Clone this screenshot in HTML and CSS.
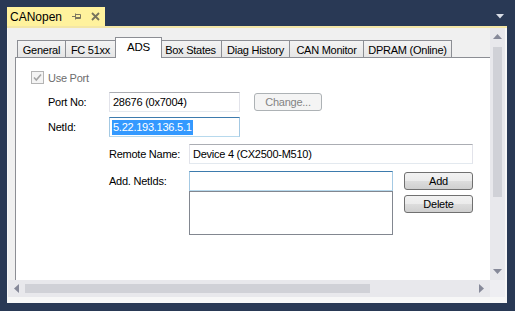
FILE: index.html
```html
<!DOCTYPE html>
<html>
<head>
<meta charset="utf-8">
<link rel="stylesheet" href="styles.css">
</head>
<body>
<div class="window">
  <div class="doc-bar">
    <div class="doc-tab">
      <span class="doc-title">CANopen</span>
      <svg class="pin" width="9" height="7" viewBox="0 0 9 7"><path d="M0 3.5H3M3.5 0.5V6.5M3.5 1.5H8.5V5.5H3.5" stroke="#7c7760" fill="none"/><path d="M4 4.5H8" stroke="#7c7760"/></svg>
      <svg class="close" width="9" height="9" viewBox="0 0 9 9"><path d="M1 1L8 8M8 1L1 8" stroke="#77735c" stroke-width="1.8"/></svg>
    </div>
    <div class="doc-menu"><svg width="8" height="5" viewBox="0 0 8 5"><path d="M0 0H8L4 4.5Z" fill="#d8dde6"/></svg></div>
  </div>
  <div class="frame">
    <div class="viewport">
      <div class="tabctl">
        <div class="tabs">
          <div class="tab tab-general">General</div>
          <div class="tab tab-fc">FC 51xx</div>
          <div class="tab tab-active">ADS</div>
          <div class="tab tab-box">Box States</div>
          <div class="tab tab-diag">Diag History</div>
          <div class="tab tab-can">CAN Monitor</div>
          <div class="tab tab-dpram">DPRAM (Online)</div>
        </div>
        <div class="page">
          <div class="check-row">
            <span class="checkbox"><svg width="11" height="11" viewBox="0 0 11 11"><path d="M2 5.5L4.3 8L9 2.5" stroke="#a4a4a4" stroke-width="1.6" fill="none"/></svg></span>
            <span>Use Port</span>
          </div>
          <div class="field-row row-port">
            <span class="label-a">Port No:</span>
            <div class="textbox tb-short">28676 (0x7004)</div>
            <button class="btn btn-change">Change...</button>
          </div>
          <div class="field-row row-netid">
            <span class="label-a">NetId:</span>
            <div class="textbox tb-short tb-focus"><span class="sel">5.22.193.136.5.1</span></div>
          </div>
          <div class="field-row row-remote">
            <span class="label-b">Remote Name:</span>
            <div class="textbox tb-remote">Device 4 (CX2500-M510)</div>
          </div>
          <div class="field-row row-add">
            <span class="label-b label-top">Add. NetIds:</span>
            <div class="add-col">
              <div class="textbox tb-add tb-focus"></div>
              <div class="listbox"></div>
            </div>
            <div class="btn-col">
              <button class="btn">Add</button>
              <button class="btn">Delete</button>
            </div>
          </div>
        </div>
      </div>
    </div>
    <div class="vscroll">
      <div class="sb-arrow"><svg width="9" height="5" viewBox="0 0 9 5"><path d="M0 5H9L4.5 0Z" fill="#868999"/></svg></div>
      <div class="vthumb"></div>
      <div class="sb-spacer"></div>
      <div class="sb-arrow"><svg width="9" height="5" viewBox="0 0 9 5"><path d="M0 0H9L4.5 5Z" fill="#868999"/></svg></div>
    </div>
    <div class="hscroll">
      <div class="sb-arrow-h"><svg width="5" height="9" viewBox="0 0 5 9"><path d="M5 0V9L0 4.5Z" fill="#868999"/></svg></div>
      <div class="hthumb"></div>
      <div class="sb-spacer"></div>
      <div class="sb-arrow-h"><svg width="5" height="9" viewBox="0 0 5 9"><path d="M0 0V9L5 4.5Z" fill="#868999"/></svg></div>
    </div>
    <div class="corner"></div>
  </div>
</div>
</body>
</html>
```
FILE: styles.css
```css
html, body {
  margin: 0;
  padding: 0;
}
body {
  background: #293955;
  font-family: "Liberation Sans", Arial, sans-serif;
  font-size: 11px;
  color: #000;
  width: 515px;
  height: 311px;
  overflow: hidden;
}
.window {
  margin: 7px 0 0 7px;
  width: 500px;
}
.doc-bar {
  display: flex;
  justify-content: space-between;
  align-items: center;
  height: 19px;
  border-bottom: 2px solid #f3e6a6;
}
.doc-tab {
  align-self: stretch;
  width: 98px;
  box-sizing: border-box;
  background: #fff29d;
  display: flex;
  align-items: center;
  padding-left: 3px;
  font-size: 12px;
}
.doc-title {
  margin-right: 10px;
}
.pin {
  margin-right: 10px;
}
.doc-menu {
  display: flex;
  padding-right: 3px;
}
.frame {
  display: grid;
  grid-template-columns: 482px 15px;
  grid-template-rows: 252px 17px;
  height: 275px;
  box-sizing: border-box;
  padding: 0 2px 6px 1px;
  background: #f7f7f7;
  letter-spacing: -0.25px;
}
.viewport {
  overflow: hidden;
  background: #f0f0f0;
  padding: 9px 0 0 7px;
  box-sizing: border-box;
}
.tabctl {
  width: 620px;
}
.tabs {
  display: flex;
  align-items: flex-end;
  height: 20px;
  padding-left: 2px;
}
.tab {
  box-sizing: border-box;
  height: 17px;
  border: 1px solid #8c8e94;
  border-bottom: none;
  background: linear-gradient(#f3f3f3, #e6e6e6);
  display: flex;
  align-items: center;
  justify-content: center;
  padding-top: 1px;
  white-space: nowrap;
}
.tab + .tab {
  margin-left: -1px;
}
.tab-general { width: 49px; }
.tab-fc { width: 51px; }
.tab-active {
  width: 47px;
  height: 21px;
  margin: 0 -2px -1px -2px;
  background: #fff;
  position: relative;
  z-index: 2;
  padding-top: 0;
  padding-bottom: 3px;
  font-size: 11.5px;
}
.tab-box { width: 63px; }
.tab-diag { width: 69px; }
.tab-can { width: 75px; }
.tab-dpram { width: 89px; }
.page {
  border: 1px solid #8c8e94;
  background: #fff;
  height: 320px;
  padding: 13px 0 0 15px;
}
.check-row {
  display: flex;
  align-items: center;
  height: 13px;
  gap: 4px;
  color: #6d6d6d;
}
.checkbox {
  box-sizing: border-box;
  width: 13px;
  height: 13px;
  border: 1px solid #b4b4b4;
  background: #f4f4f4;
  display: flex;
}
.field-row {
  display: flex;
  align-items: center;
  height: 20px;
}
.row-port {
  margin-top: 8px;
  padding-left: 17px;
}
.row-netid {
  margin-top: 5px;
  padding-left: 17px;
}
.row-remote {
  margin-top: 7px;
  padding-left: 78px;
}
.row-add {
  margin-top: 7px;
  padding-left: 78px;
  align-items: flex-start;
  height: auto;
}
.label-a {
  width: 61px;
}
.label-b {
  width: 80px;
}
.label-top {
  line-height: 20px;
}
.textbox {
  box-sizing: border-box;
  height: 20px;
  border: 1px solid;
  border-color: #abadb3 #e2e3ea #e3e9ef #e2e3ea;
  background: #fff;
  padding-left: 3px;
  display: flex;
  align-items: center;
  white-space: nowrap;
}
.tb-short {
  width: 131px;
}
.tb-remote {
  width: 284px;
}
.tb-add {
  width: 204px;
}
.tb-focus {
  border-color: #3d7bad #a4c9e3 #b7d9ed #a4c9e3;
  padding-left: 2px;
}
.sel {
  background: #3399ff;
  color: #fff;
  line-height: 15px;
  padding: 0 1px;
}
.add-col {
  display: flex;
  flex-direction: column;
}
.listbox {
  box-sizing: border-box;
  width: 204px;
  height: 44px;
  border: 1px solid #828790;
  background: #fff;
}
.btn {
  box-sizing: border-box;
  width: 69px;
  height: 18px;
  border: 1px solid #707070;
  border-radius: 3px;
  background: linear-gradient(#f2f2f2 0, #ebebeb 50%, #dddddd 50%, #cfcfcf 100%);
  font: inherit;
  letter-spacing: inherit;
  color: #000;
  padding: 0;
  display: flex;
  align-items: center;
  justify-content: center;
}
.btn-change {
  width: 68px;
  margin-left: 14px;
  border-color: #adb2b5;
  background: #f4f4f4;
  color: #838383;
}
.btn-col {
  display: flex;
  flex-direction: column;
  gap: 5px;
  margin-left: 11px;
  margin-top: 1px;
}
.vscroll {
  background: #e8e8ec;
  display: flex;
  flex-direction: column;
  align-items: center;
}
.sb-arrow {
  height: 17px;
  display: flex;
  align-items: center;
  justify-content: center;
}
.vthumb {
  width: 9px;
  height: 150px;
  margin-top: 2px;
  background: #d0d1d7;
}
.sb-spacer {
  flex: 1;
}
.hscroll {
  background: #e8e8ec;
  display: flex;
  align-items: center;
}
.sb-arrow-h {
  width: 17px;
  display: flex;
  align-items: center;
  justify-content: center;
}
.hthumb {
  width: 345px;
  height: 9px;
  background: #d0d1d7;
}
.corner {
  background: #eeeef2;
}
```
